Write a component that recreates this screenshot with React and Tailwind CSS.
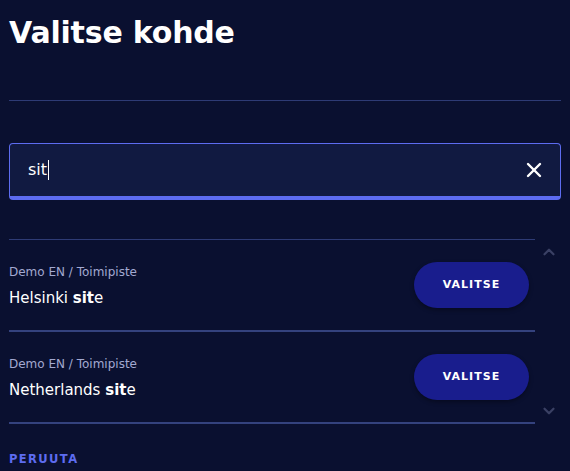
import { X, ChevronUp, ChevronDown } from "lucide-react";

const sites = [
  { id: 1, path: "Demo EN / Toimipiste", name: "Helsinki ", rest: "e" },
  { id: 2, path: "Demo EN / Toimipiste", name: "Netherlands ", rest: "e" },
];

const font = { fontFamily: "'DejaVu Sans', 'Noto Sans', sans-serif" };

export default function App() {
  return (
    <div className="min-h-[471px] w-[570px] bg-[#0a1030] px-[9px] text-white" style={font}>
      <h1 className="pt-[13px] text-[30px] font-semibold leading-[40px] tracking-[-0.2px]">Valitse kohde</h1>
      <div className="mt-[47px] h-px bg-[#2e3b75]" />

      <div className="mt-[42px] flex h-[57px] items-center rounded-[4px] border border-b-4 border-[#5d6cf0] bg-[#111a41] pl-[18px] pr-[14px]">
        <span className="text-[16px]">sit</span>
        <span className="ml-px h-[20px] w-px bg-white" />
        <div className="flex-1" />
        <X size={24} strokeWidth={2.4} className="text-white" />
      </div>

      <div className="mt-[39px] flex">
        <div className="w-[526px]">
          <div className="h-px bg-[#2e3b75]" />
          {sites.map((s) => (
            <div key={s.id}>
              <div className="flex h-[90px] items-start justify-between">
                <div className="flex flex-col pt-[24px]">
                  <span className="text-[12px] leading-[16px] text-[#a3a9d1]">{s.path}</span>
                  <span className="mt-[8px] text-[15px] leading-[20px]">
                    {s.name}
                    <span className="font-bold">sit</span>
                    {s.rest}
                  </span>
                </div>
                <button className="mr-[6px] mt-[22px] h-[46px] w-[115px] rounded-full bg-[#191d8d] text-[11px] font-bold tracking-[1px] text-white shadow-[0_2px_4px_rgba(0,0,0,0.35)]">
                  VALITSE
                </button>
              </div>
              <div className="h-[2px] bg-[#34427e]" />
            </div>
          ))}
        </div>
        <div className="flex flex-1 flex-col items-center justify-between pl-[2px] pb-[4px] pt-[4px]">
          <ChevronUp size={18} strokeWidth={3} className="text-[#3a4064]" />
          <ChevronDown size={18} strokeWidth={3} className="text-[#3a4064]" />
        </div>
      </div>

      <div className="mt-[27px] text-[11.5px] font-bold tracking-[1.4px] text-[#5d6cf0]">PERUUTA</div>
    </div>
  );
}
